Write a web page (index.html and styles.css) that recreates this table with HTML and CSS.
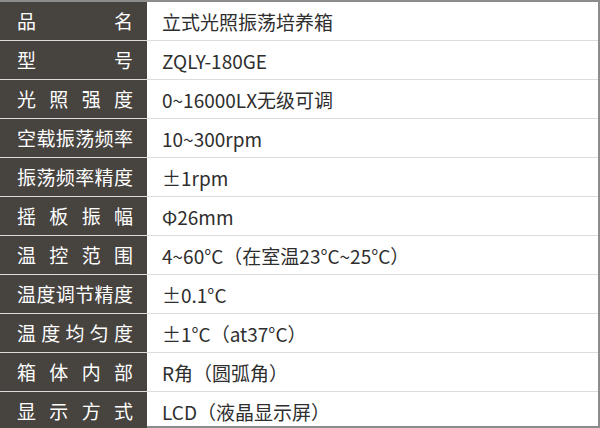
FILE: index.html
```html
<!DOCTYPE html>
<html lang="zh-CN">
<head>
<meta charset="utf-8">
<link rel="stylesheet" href="styles.css">
</head>
<body>
<div class="spec">
  <div class="row"><div class="key">品名</div><div class="val">立式光照振荡培养箱</div></div>
  <div class="row"><div class="key">型号</div><div class="val">ZQLY-180GE</div></div>
  <div class="row"><div class="key">光照强度</div><div class="val">0~16000LX无级可调</div></div>
  <div class="row"><div class="key">空载振荡频率</div><div class="val">10~300rpm</div></div>
  <div class="row"><div class="key">振荡频率精度</div><div class="val">±1rpm</div></div>
  <div class="row"><div class="key">摇板振幅</div><div class="val">Φ26mm</div></div>
  <div class="row"><div class="key">温控范围</div><div class="val">4~60°C（在室温23°C~25°C）</div></div>
  <div class="row"><div class="key">温度调节精度</div><div class="val">±0.1°C</div></div>
  <div class="row"><div class="key">温度均匀度</div><div class="val">±1°C（at37°C）</div></div>
  <div class="row"><div class="key">箱体内部</div><div class="val">R角（圆弧角）</div></div>
  <div class="row"><div class="key">显示方式</div><div class="val">LCD（液晶显示屏）</div></div>
</div>
</body>
</html>
```
FILE: styles.css
```css
html, body {
  margin: 0;
  padding: 0;
  background: #ffffff;
}
.spec {
  width: 600px;
  height: 428px;
  box-sizing: border-box;
  border-top: 2px solid #8c8c8c;
  border-right: 2px solid #8c8c8c;
  border-bottom: 2px solid #8c8c8c;
  display: grid;
  grid-template-rows: repeat(11, 1fr);
  font-family: "Noto Sans CJK SC", "Noto Sans", sans-serif;
  font-size: 19px;
}
.row {
  display: grid;
  grid-template-columns: 147px 1fr;
  border-bottom: 1px solid #dcdcdc;
}
.row:last-child {
  border-bottom: none;
}
.key {
  background: #47433f;
  color: #ffffff;
  padding: 0 14px 0 17px;
  text-align: justify;
  text-align-last: justify;
  line-height: 38px;
  white-space: nowrap;
}
.val {
  color: #2e2e2e;
  padding-left: 15px;
  display: flex;
  align-items: center;
}
```
